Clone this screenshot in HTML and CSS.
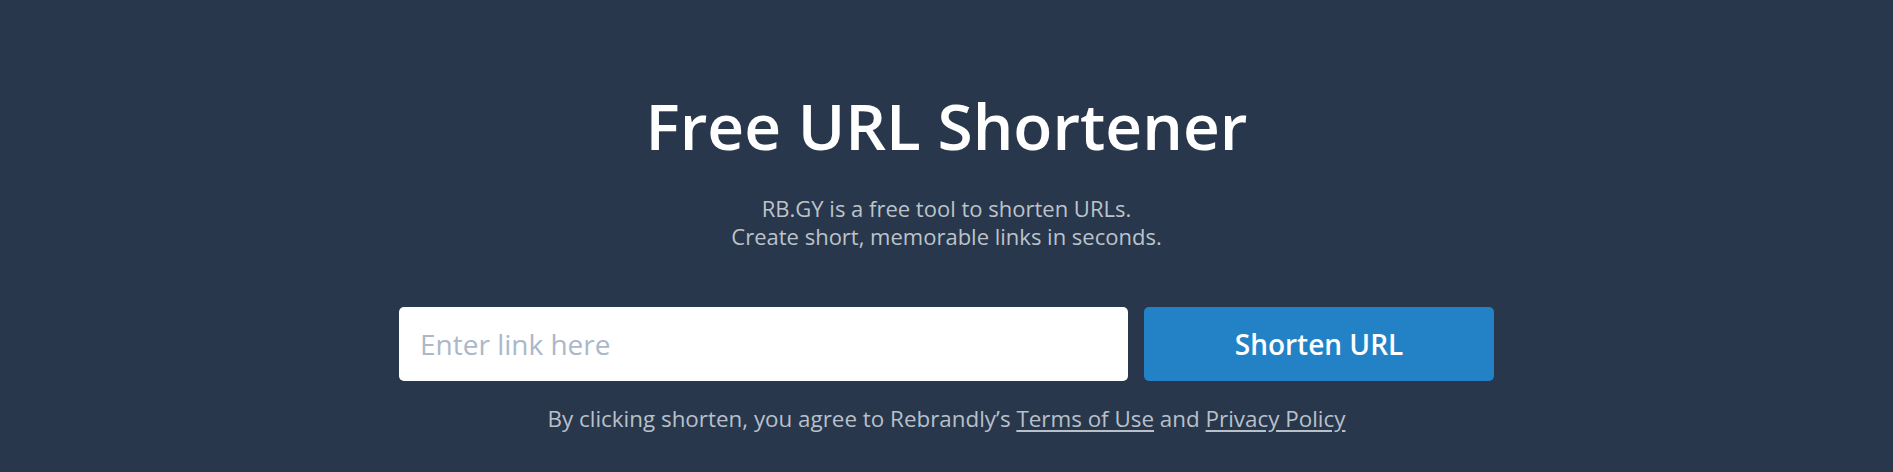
FILE: index.html
```html
<!DOCTYPE html>
<html lang="en">
<head>
  <meta charset="UTF-8">
  <title>Free URL Shortener</title>
  <link rel="stylesheet" href="styles.css">
</head>
<body>

<section class="hero">
  <h1 class="hero-title">Free URL Shortener</h1>
  <p class="hero-sub">
    RB.GY is a free tool to shorten URLs.<br>
    Create short, memorable links in seconds.
  </p>

  <form class="shorten-form" onsubmit="return false">
    <input class="link-input" type="text" placeholder="Enter link here">
    <button class="shorten-btn" type="submit">Shorten URL</button>
  </form>

  <p class="terms">
    By clicking shorten, you agree to Rebrandly’s <a href="#">Terms of Use</a> and <a href="#">Privacy Policy</a>
  </p>
</section>

</body>
</html>
```

FILE: styles.css
```css
body {
  margin: 0;
  background: #28374b;
  font-family: "Open Sans", Lato, sans-serif;
}
.hero {
  padding-top: 88px;
  text-align: center;
}
.hero-title {
  margin: 0;
  font-size: 64px;
  line-height: 1.2;
  font-weight: 600;
  color: #fff;
}
.hero-sub {
  margin: 29px 0 0;
  font-size: 22px;
  line-height: 28px;
  color: #bcc3cc;
}
.shorten-form {
  display: flex;
  justify-content: center;
  gap: 16px;
  margin-top: 57px;
}
.link-input {
  width: 729px;
  height: 74px;
  box-sizing: border-box;
  padding: 0 21px;
  border: none;
  border-radius: 5px;
  background: #fff;
  font-family: inherit;
  font-size: 28px;
  color: #28374b;
  outline: none;
}
.link-input::placeholder {
  color: #aab8c9;
}
.shorten-btn {
  width: 350px;
  height: 74px;
  border: none;
  border-radius: 5px;
  background: #2282c5;
  color: #fff;
  font-family: inherit;
  font-size: 28px;
  font-weight: 600;
  cursor: pointer;
}
.terms {
  margin: 25px 0 0;
  font-size: 22.4px;
  line-height: 26px;
  color: #b8c0ca;
}
.terms a {
  color: #b8c0ca;
  text-decoration: underline;
  text-underline-offset: 3px;
}
```
